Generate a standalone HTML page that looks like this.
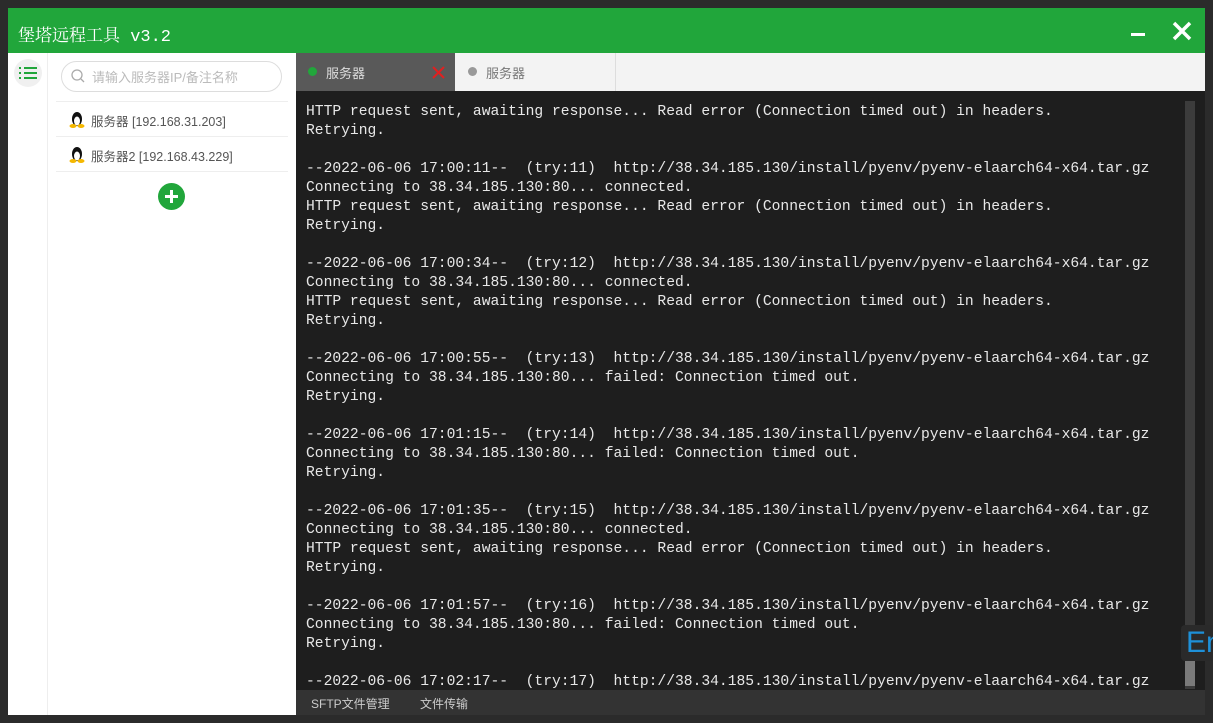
<!DOCTYPE html><html><head><meta charset="utf-8"><style>
body{margin:0;width:1213px;height:723px;background:#2b2b2b;position:relative;overflow:hidden;font-family:"Liberation Sans","Noto Sans CJK SC",sans-serif}
.a{position:absolute}
.term{left:296px;top:91px;width:909px;height:599px;background:#1e1e1e;overflow:hidden}
pre{margin:0;position:absolute;left:10px;top:12px;font:14.65px/19px "Liberation Mono",monospace;color:#e8e8e8}
</style></head><body>
<div class="a" style="left:8px;top:8px;width:1197px;height:707px;background:#fff"></div>
<div class="a" style="left:8px;top:8px;width:1197px;height:45px;background:#21a63b"></div>
<div class="a" style="left:18px;top:21px;color:#fff;font:17px 'Liberation Mono','Noto Serif CJK SC',serif">堡塔远程工具 v3.2</div>
<div class="a" style="left:1131px;top:33px;width:14px;height:3px;background:#fff"></div>
<svg class="a" style="left:1172px;top:21px" width="20" height="20"><path d="M2 2L18 18M18 2L2 18" stroke="#fff" stroke-width="3.5"/></svg>
<div class="a" style="left:47px;top:53px;width:1px;height:662px;background:#eee"></div>
<div class="a" style="left:14px;top:59px;width:28px;height:28px;border-radius:50%;background:#f0f0f0"></div>
<svg class="a" style="left:19px;top:66px" width="18" height="14"><g stroke="#21a63b" stroke-width="2"><path d="M0 2h2M5 2h13M0 7h2M5 7h13M0 12h2M5 12h13"/></g></svg>
<div class="a" style="left:61px;top:61px;width:219px;height:29px;border:1px solid #ddd;border-radius:16px"></div>
<svg class="a" style="left:71px;top:69px" width="14" height="14"><circle cx="6" cy="6" r="5" fill="none" stroke="#aaa" stroke-width="1.3"/><path d="M10 10l3 3" stroke="#aaa" stroke-width="1.3"/></svg>
<div class="a" style="left:92px;top:67px;color:#bbb;font-size:13px">请输入服务器IP/备注名称</div>
<div class="a" style="left:56px;top:101px;width:232px;height:1px;background:#eee"></div>
<div class="a" style="left:56px;top:136px;width:232px;height:1px;background:#eee"></div>
<div class="a" style="left:56px;top:171px;width:232px;height:1px;background:#eee"></div>
<svg class="a" style="left:69px;top:110px" width="16" height="18"><ellipse cx="8" cy="9" rx="5" ry="7" fill="#111"/><ellipse cx="8" cy="11" rx="3" ry="4.5" fill="#fff"/><ellipse cx="4" cy="16" rx="3.5" ry="2" fill="#f5b800"/><ellipse cx="12" cy="16" rx="3.5" ry="2" fill="#f5b800"/></svg>
<div class="a" style="left:91px;top:111px;color:#555;font-size:12.5px">服务器 [192.168.31.203]</div>
<svg class="a" style="left:69px;top:145px" width="16" height="18"><ellipse cx="8" cy="9" rx="5" ry="7" fill="#111"/><ellipse cx="8" cy="11" rx="3" ry="4.5" fill="#fff"/><ellipse cx="4" cy="16" rx="3.5" ry="2" fill="#f5b800"/><ellipse cx="12" cy="16" rx="3.5" ry="2" fill="#f5b800"/></svg>
<div class="a" style="left:91px;top:146px;color:#555;font-size:12.5px">服务器2 [192.168.43.229]</div>
<div class="a" style="left:158px;top:183px;width:27px;height:27px;border-radius:50%;background:#21a63b"></div>
<svg class="a" style="left:158px;top:183px" width="27" height="27"><path d="M13.5 7v13M7 13.5h13" stroke="#fff" stroke-width="3"/></svg>
<div class="a" style="left:296px;top:53px;width:909px;height:38px;background:#f3f3f3"></div>
<div class="a" style="left:296px;top:53px;width:159px;height:38px;background:#595959"></div>
<div class="a" style="left:615px;top:53px;width:1px;height:38px;background:#ddd"></div>
<div class="a" style="left:308px;top:67px;width:9px;height:9px;border-radius:50%;background:#21a63b"></div>
<div class="a" style="left:326px;top:63px;color:#ddd;font-size:13px">服务器</div>
<svg class="a" style="left:432px;top:66px" width="13" height="13"><path d="M1 1L12 12M12 1L1 12" stroke="#e02020" stroke-width="2"/></svg>
<div class="a" style="left:468px;top:67px;width:9px;height:9px;border-radius:50%;background:#999"></div>
<div class="a" style="left:486px;top:63px;color:#777;font-size:13px">服务器</div>
<div class="a term"><pre>HTTP request sent, awaiting response... Read error (Connection timed out) in headers.
Retrying.

--2022-06-06 17:00:11--  (try:11)  http://38.34.185.130/install/pyenv/pyenv-elaarch64-x64.tar.gz
Connecting to 38.34.185.130:80... connected.
HTTP request sent, awaiting response... Read error (Connection timed out) in headers.
Retrying.

--2022-06-06 17:00:34--  (try:12)  http://38.34.185.130/install/pyenv/pyenv-elaarch64-x64.tar.gz
Connecting to 38.34.185.130:80... connected.
HTTP request sent, awaiting response... Read error (Connection timed out) in headers.
Retrying.

--2022-06-06 17:00:55--  (try:13)  http://38.34.185.130/install/pyenv/pyenv-elaarch64-x64.tar.gz
Connecting to 38.34.185.130:80... failed: Connection timed out.
Retrying.

--2022-06-06 17:01:15--  (try:14)  http://38.34.185.130/install/pyenv/pyenv-elaarch64-x64.tar.gz
Connecting to 38.34.185.130:80... failed: Connection timed out.
Retrying.

--2022-06-06 17:01:35--  (try:15)  http://38.34.185.130/install/pyenv/pyenv-elaarch64-x64.tar.gz
Connecting to 38.34.185.130:80... connected.
HTTP request sent, awaiting response... Read error (Connection timed out) in headers.
Retrying.

--2022-06-06 17:01:57--  (try:16)  http://38.34.185.130/install/pyenv/pyenv-elaarch64-x64.tar.gz
Connecting to 38.34.185.130:80... failed: Connection timed out.
Retrying.

--2022-06-06 17:02:17--  (try:17)  http://38.34.185.130/install/pyenv/pyenv-elaarch64-x64.tar.gz</pre>
<div class="a" style="left:889px;top:10px;width:10px;height:588px;background:#3c3c3c"></div>
<div class="a" style="left:889px;top:567px;width:10px;height:28px;background:#7a7a7a"></div>
</div>
<div class="a" style="left:296px;top:690px;width:909px;height:25px;background:#333"></div>
<div class="a" style="left:311px;top:695px;color:#ccc;font-size:12px">SFTP文件管理</div>
<div class="a" style="left:420px;top:695px;color:#ccc;font-size:12px">文件传输</div>
<div class="a" style="left:1181px;top:625px;width:32px;height:36px;background:#2a2a2a;border-radius:4px;color:#1e90d8;font-size:30px;line-height:36px;padding-left:5px">En</div>
</body></html>
